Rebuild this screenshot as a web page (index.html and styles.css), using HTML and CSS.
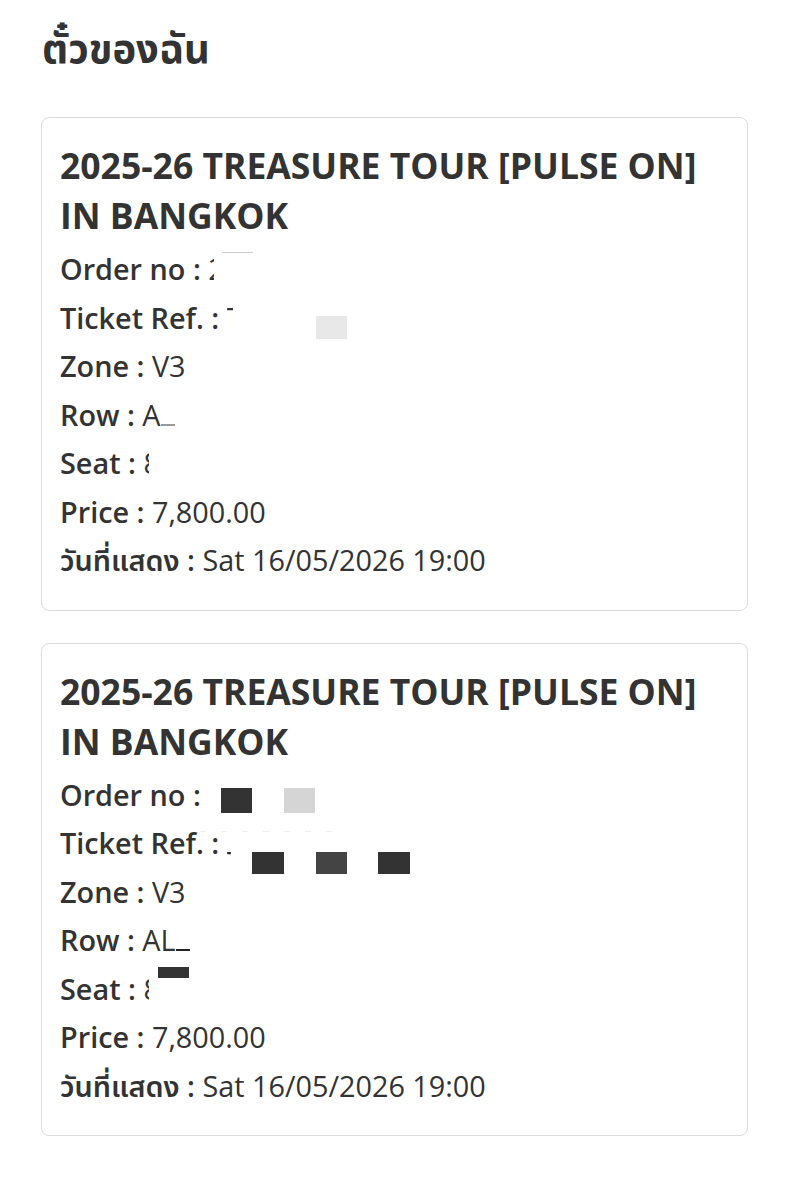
FILE: index.html
```html
<!DOCTYPE html>
<html lang="th">
<head>
<meta charset="utf-8">
<title>ตั๋วของฉัน</title>
<link rel="stylesheet" href="styles.css">
</head>
<body>
<main class="page">
  <h1 class="page-title">ตั๋วของฉัน</h1>

  <section class="ticket">
    <h2 class="ticket-title">2025-26 TREASURE TOUR [PULSE ON] IN BANGKOK</h2>
    <div class="row"><b>Order no :</b> <span class="clip">2</span><span class="mask mask-line m1"></span></div>
    <div class="row"><b>Ticket Ref. :</b> <span class="clip">T</span><span class="mask mask-light m2"></span></div>
    <div class="row"><b>Zone :</b> V3</div>
    <div class="row"><b>Row :</b> A<span class="under"></span></div>
    <div class="row"><b>Seat :</b> <span class="clip">8</span></div>
    <div class="row"><b>Price :</b> 7,800.00</div>
    <div class="row"><b>วันที่แสดง :</b> Sat 16/05/2026 19:00</div>
  </section>

  <section class="ticket">
    <h2 class="ticket-title">2025-26 TREASURE TOUR [PULSE ON] IN BANGKOK</h2>
    <div class="row"><b>Order no :</b> <span class="mask mask-dark m3"></span><span class="mask mask-grey m4"></span></div>
    <div class="row"><b>Ticket Ref. :</b> <span class="clip clip-top">T</span><span class="mask mask-dots m9"></span><span class="mask mask-dark m5"></span><span class="mask mask-mid m6"></span><span class="mask mask-dark m7"></span></div>
    <div class="row"><b>Zone :</b> V3</div>
    <div class="row"><b>Row :</b> AL<span class="under dark"></span></div>
    <div class="row"><b>Seat :</b> <span class="clip">8</span><span class="mask mask-dark m8"></span></div>
    <div class="row"><b>Price :</b> 7,800.00</div>
    <div class="row"><b>วันที่แสดง :</b> Sat 16/05/2026 19:00</div>
  </section>
</main>
</body>
</html>
```

FILE: styles.css
```css
* { box-sizing: border-box; }
html, body { margin: 0; padding: 0; background: #fff; }
body {
  font-family: "Open Sans", "Noto Sans", "Noto Sans Thai", "DejaVu Sans", sans-serif;
  color: #333;
}
.page {
  padding: 22px 41px 40px 41px;
  display: flex;
  flex-direction: column;
  gap: 32px;
}
.page-title {
  margin: 0 0 11px 1px;
  font-size: 40px;
  line-height: 52px;
  font-weight: 700;
  color: #333;
}
.ticket {
  border: 1px solid #dcdcdc;
  border-radius: 8px;
  padding: 22px 18px 25px 18px;
}
.ticket-title {
  margin: 0 0 5px 0;
  font-size: 35.5px;
  line-height: 50px;
  font-weight: 700;
  color: #333;
}
.row {
  position: relative;
  font-size: 28.8px;
  line-height: 48.5px;
  color: #333;
  white-space: nowrap;
}
.row b { font-weight: 650; }
.clip {
  display: inline-block;
  width: 6px;
  overflow: hidden;
  vertical-align: bottom;
}
.clip-top {
  height: 30px;
  width: 4px;
}
.under {
  display: inline-block;
  width: 14px;
  height: 12px;
  border-bottom: 2px solid #999;
  vertical-align: baseline;
}
.under.dark { border-bottom-color: #222; width: 14px; }
.mask { position: absolute; }
.mask-line { height: 1px; background: #ccc; }
.mask-light { background: #e8e8e8; }
.mask-grey { background: #d5d5d5; }
.mask-dark { background: #333; }
.mask-mid { background: #444; }
.mask-dots { height: 1px; background: repeating-linear-gradient(90deg, #eee 0 6px, transparent 6px 21px); }
.m1 { left: 162px; top: 7px; width: 31px; }
.m2 { left: 256px; top: 22px; width: 31px; height: 23px; }
.m3 { left: 161px; top: 17px; width: 31px; height: 25px; }
.m4 { left: 224px; top: 17px; width: 31px; height: 25px; }
.m5 { left: 192px; top: 33px; width: 32px; height: 22px; }
.m6 { left: 256px; top: 33px; width: 31px; height: 22px; }
.m7 { left: 318px; top: 33px; width: 32px; height: 22px; }
.m8 { left: 98px; top: 2px; width: 31px; height: 11px; }
.m9 { left: 140px; top: 12px; width: 140px; }
```
